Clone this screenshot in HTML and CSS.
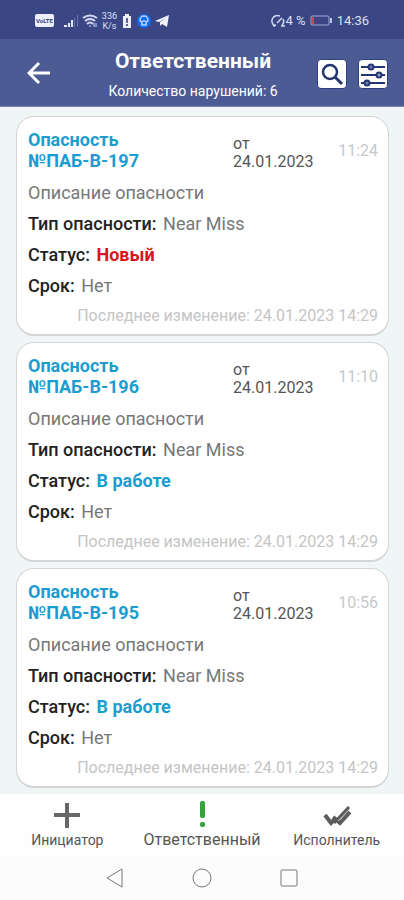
FILE: index.html
```html
<!DOCTYPE html>
<html lang="ru">
<head>
<meta charset="utf-8">
<meta name="viewport" content="width=device-width, initial-scale=1">
<title>Ответственный</title>
<link rel="stylesheet" href="styles.css">
</head>
<body>
<div class="app">
  <div class="status">
    <div class="status-left">
      <span class="volte">VoLTE</span>
      <svg class="signal" width="14" height="12" viewBox="0 0 14 12"><path d="M0 12V10H3V12ZM4 12V8H6V12ZM7 12V5H9V12Z" fill="#e4e8fa"/><path d="M10 12V3H11V12ZM13 12V0H14V12Z" fill="#6874ad"/></svg>
      <svg width="16" height="14" viewBox="0 0 16 14" fill="none" stroke="#d5daf2" stroke-width="2"><path d="M1 4Q8-1 15 4M3 7Q8 3 13 7M5 10Q8 7 11 10"/><path d="M8 11V13M12 9V13M14 9V13" stroke-width="1"/></svg>
      <span class="speed">336<br>K/s</span>
      <svg class="cell" width="8" height="14" viewBox="0 0 8 14"><path d="M2 0H6V2H8V14H0V2H2Z" fill="#eef1fd"/><path d="M4 4V9M4 10V12" stroke="#59659f" stroke-width="2"/></svg>
      <svg width="14" height="14" viewBox="0 0 14 14"><circle cx="7" cy="7" r="7" fill="#146dee"/><path d="M5 8Q3 7 3 6A4 4 0 0 1 11 6Q11 7 9 8V11H5Z" fill="none" stroke="#bcd8ff" stroke-width="1.5"/><path d="M6 6L7 8L8 6" fill="none" stroke="#bcd8ff"/></svg>
      <svg class="plane" width="14" height="12" viewBox="0 0 14 12"><path d="M0 6L14 0L12 12L7 9L5 11V7L11 3L4 7Z" fill="#f0f2fc"/></svg>
    </div>
    <div class="status-right">
      <span class="saver"><svg width="15" height="12" viewBox="0 0 15 12" fill="none" stroke="#d5daf2" stroke-width="1.5"><path d="M4 11A5 5 0 0 1 9 1M12 4A5 5 0 0 1 11 10M2 11L5 10M6 8L11 3M10 11H14"/></svg>4 %</span>
      <svg class="battery" width="23" height="12" viewBox="0 0 23 12"><rect x="1" y="1" width="18" height="9" rx="1" fill="none" stroke="#9da7d3"/><path d="M2 2H4V9H2Z" fill="#d4405c"/><path d="M20 3H22V8H20Z" fill="#bac2e5"/></svg>
      <span>14:36</span>
    </div>
  </div>
  <header class="header">
    <button class="back" aria-label="Назад"><svg width="24" height="24" viewBox="0 0 24 24" fill="none" stroke="#fff" stroke-width="3"><path d="M23 12H3M12 2L2 12L12 22"/></svg></button>
    <div class="heading"><h1>Ответственный</h1><p>Количество нарушений: 6</p></div>
    <div class="actions">
      <button class="tool" aria-label="Поиск"><svg width="28" height="28" viewBox="0 0 28 28" fill="none" stroke="#253572"><circle cx="12" cy="12" r="7" stroke-width="2.5"/><path d="M17 17L24 24" stroke-width="3"/></svg></button>
      <button class="tool" aria-label="Фильтр"><svg width="28" height="28" viewBox="0 0 28 28" fill="none" stroke="#253572" stroke-width="2"><path d="M2 7H26M2 15H26M2 23H26"/><circle cx="12" cy="7" r="2.5" fill="#7480b1"/><circle cx="20" cy="15" r="2.5" fill="#9aa3c8"/><circle cx="8" cy="23" r="2.5" fill="#7480b1"/></svg></button>
    </div>
  </header>
  <main class="list">
    <article class="card">
      <div class="top"><h2>Опасность №ПАБ-В-197</h2><span class="date">от 24.01.2023</span><time>11:24</time></div>
      <p>Описание опасности</p>
      <p><b>Тип опасности:</b> Near Miss</p>
      <p><b>Статус:</b> <strong class="new">Новый</strong></p>
      <p><b>Срок:</b> Нет</p>
      <p class="changed">Последнее изменение: 24.01.2023 14:29</p>
    </article>
    <article class="card">
      <div class="top"><h2>Опасность №ПАБ-В-196</h2><span class="date">от 24.01.2023</span><time>11:10</time></div>
      <p>Описание опасности</p>
      <p><b>Тип опасности:</b> Near Miss</p>
      <p><b>Статус:</b> <strong class="active">В работе</strong></p>
      <p><b>Срок:</b> Нет</p>
      <p class="changed">Последнее изменение: 24.01.2023 14:29</p>
    </article>
    <article class="card">
      <div class="top"><h2>Опасность №ПАБ-В-195</h2><span class="date">от 24.01.2023</span><time>10:56</time></div>
      <p>Описание опасности</p>
      <p><b>Тип опасности:</b> Near Miss</p>
      <p><b>Статус:</b> <strong class="active">В работе</strong></p>
      <p><b>Срок:</b> Нет</p>
      <p class="changed">Последнее изменение: 24.01.2023 14:29</p>
    </article>
  </main>
  <nav class="tabs">
    <a href="#initiator"><svg width="28" height="28" viewBox="0 0 28 28" fill="none" stroke="#676767"><path d="M14 2V27M1 14H27" stroke-width="4"/></svg><span>Инициатор</span></a>
    <a href="#responsible" class="current"><svg width="28" height="28" viewBox="0 0 28 28" fill="#35a23c"><rect x="12" y="0" width="5" height="17" rx="2"/><rect x="12" y="21" width="5" height="5" rx="2"/></svg><span>Ответственный</span></a>
    <a href="#executor"><svg width="28" height="28" viewBox="0 0 28 28" fill="none" stroke="#5c5c5c" stroke-width="4"><path d="M2 14L8 22L13 17M10 16L17 22L27 11"/><path d="M11 22L26 6" stroke-width="3"/><path d="M15 20L26 9" stroke="#b5b5b5" stroke-width="1"/></svg><span>Исполнитель</span></a>
  </nav>
  <div class="system">
    <button aria-label="Назад"><svg width="20" height="20" viewBox="0 0 20 20"><path d="M2 10L17 1V19Z"/></svg></button>
    <button aria-label="Домой"><svg width="20" height="20" viewBox="0 0 20 20"><circle cx="10" cy="10" r="9"/></svg></button>
    <button aria-label="Недавние"><svg width="20" height="20" viewBox="0 0 20 20"><rect x="2" y="2" width="16" height="16" rx="1"/></svg></button>
  </div>
</div>
</body>
</html>
```
FILE: styles.css
```css
* { box-sizing: border-box; }
body { margin: 0; font-family: Roboto, "Noto Sans", sans-serif; background: #fcfcfc; }
h1, h2, p { margin: 0; }
button { padding: 0; border: 0; background: none; }
svg { display: block; flex: none; }
.app { min-height: 100vh; display: flex; flex-direction: column; }
.status { height: 39px; padding: 2px 35px 0; display: flex; justify-content: space-between; align-items: center; background: #3b4784; color: #dce0f4; font-size: 13px; }
.status-left, .status-right { display: flex; align-items: center; gap: 4px; }
.saver { display: flex; align-items: center; }
.volte { padding: 0 1px; border-radius: 2px; background: #edf0fc; color: #39457e; font-size: 6px; line-height: 13px; font-weight: 700; }
.signal { margin-left: 6px; }
.speed { font-size: 9px; line-height: 10px; text-align: center; }
.cell { margin: 0 2px; }
.header { height: 68px; padding: 0 16px 0 25px; display: grid; grid-template-columns: 50px 1fr 77px; align-items: center; background: #4d5b95; color: #fff; border-bottom: 1px solid #7883af; }
.back { justify-self: start; padding: 2px; }
.heading { padding-top: 8px; text-align: center; white-space: nowrap; }
.heading h1 { font-size: 21px; line-height: 28px; }
.heading p { font-size: 14px; line-height: 32px; }
.actions { display: flex; justify-content: flex-end; gap: 11px; padding-top: 2px; }
.tool { border: 1px solid #2d4084; border-radius: 4px; background: #fff; }
.list { flex: 1; padding: 9px 15px 6px 16px; display: flex; flex-direction: column; gap: 6px; background: #f0f5f6; }
.card { padding: 12px 10px 4px 11px; border: 1px solid #d3d5d6; border-bottom-width: 2px; border-radius: 18px; background: #fff; color: #777; font-size: 18px; }
.card p { line-height: 31px; }
.card b { color: #222; font-weight: 500; margin-right: 2px; }
.top { display: grid; grid-template-columns: 205px 1fr auto; align-items: center; margin-bottom: 6px; }
.top h2 { width: 130px; font-size: 18px; line-height: 21px; color: #1a9dd0; font-weight: 700; }
.date { align-self: end; width: 82px; font-size: 16px; line-height: 18px; color: #555; }
.top time { font-size: 16px; color: #c8c8c8; }
.new { color: #d9151b; }
.active { color: #1a9dd0; }
.card .changed { font-size: 16px; line-height: 29px; text-align: right; color: #c5c5c5; white-space: nowrap; }
.tabs { height: 62px; display: grid; grid-template-columns: repeat(3, 1fr); background: #fefefe; }
.tabs a { display: flex; flex-direction: column; align-items: center; gap: 2px; padding-top: 7px; color: #555; text-decoration: none; font-size: 14px; line-height: 18px; }
.tabs .current { font-size: 16px; }
.system { height: 44px; padding: 0 72px; display: grid; grid-template-columns: repeat(3, 1fr); align-items: center; justify-items: center; }
.system svg { fill: none; stroke: #777; stroke-width: 1; }
```
